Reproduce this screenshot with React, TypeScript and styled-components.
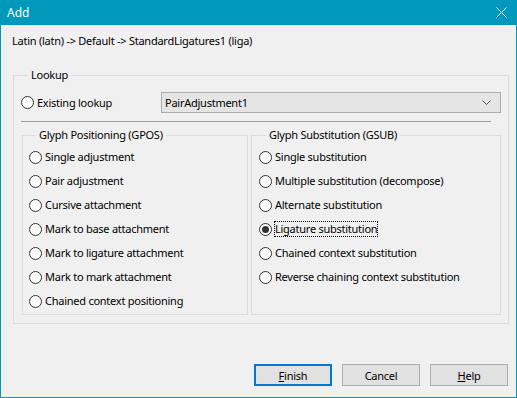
import React from "react";
import styled, { createGlobalStyle } from "styled-components";

const Global = createGlobalStyle`
  html, body { margin: 0; padding: 0; background: #f0f0f0; }
  body { font-family: "Noto Sans", "DejaVu Sans", sans-serif; font-size: 11px; letter-spacing: -0.25px; color: #000; }
  * { box-sizing: border-box; }
`;

const Window = styled.div`
  width: 517px;
  height: 398px;
  border: 1px solid #0099bc;
  border-top: none;
  background: #f0f0f0;
  display: flex;
  flex-direction: column;
`;

const TitleBar = styled.div`
  height: 25px;
  flex: none;
  background: #0099bc;
  color: #fff;
  display: flex;
  align-items: center;
  justify-content: space-between;
  padding: 0 10px 0 7px;
  font-size: 12px;
  letter-spacing: 0;
  margin: 0 -1px;
`;

const Body = styled.div`
  flex: 1;
  display: flex;
  flex-direction: column;
  padding: 0 7px 11px 12px;
`;

const PathLine = styled.div`
  height: 16px;
  line-height: 16px;
  margin-top: 8px;
  margin-left: -1px;
`;

const Group = styled.fieldset<{ $pad: string }>`
  margin: 0;
  border: 1px solid #dcdcdc;
  padding: ${(p) => p.$pad};
  min-width: 0;
`;

const Legend = styled.legend`
  padding: 0 3px;
  margin-left: 7px;
  line-height: 14px;
  height: 14px;
`;

const LookupGroup = styled(Group)`
  margin-top: 19px;
  height: 256px;
`;

const LookupRow = styled.div`
  display: flex;
  align-items: center;
  height: 21px;
  margin-top: 10px;
`;

const RadioLabel = styled.label<{ $w?: number }>`
  display: flex;
  align-items: center;
  gap: 3px;
  height: 24px;
  width: ${(p) => (p.$w ? `${p.$w}px` : "auto")};
  flex: none;
  white-space: nowrap;
`;

const Circle = styled.span<{ $on?: boolean }>`
  width: 13px;
  height: 13px;
  border-radius: 50%;
  border: 1px solid #333;
  background: #fff;
  display: flex;
  align-items: center;
  justify-content: center;
  flex: none;
  &::after {
    content: "";
    width: 7px;
    height: 7px;
    border-radius: 50%;
    background: ${(p) => (p.$on ? "#333" : "transparent")};
  }
`;

const Focus = styled.span<{ $focus?: boolean }>`
  outline: ${(p) => (p.$focus ? "1px dotted #000" : "none")};
  line-height: 14px;
`;

const Select = styled.div`
  flex: 1;
  height: 21px;
  background: #e5e5e5;
  border: 1px solid #adadad;
  display: flex;
  align-items: center;
  justify-content: space-between;
  padding: 0 9px 0 3px;
`;

const Separator = styled.div`
  height: 1px;
  background: #a0a0a0;
  margin: 8px 10px 6px 0;
`;

const Columns = styled.div`
  display: flex;
  gap: 3px;
  margin-left: 1px;
`;

const SubGroup = styled(Group)`
  height: 187px;
`;

const Left = styled(SubGroup)`
  width: 226px;
`;

const Right = styled(SubGroup)`
  flex: 1;
`;

const List = styled.div`
  display: flex;
  flex-direction: column;
  margin-top: 3px;
`;

const ButtonRow = styled.div`
  margin-top: auto;
  display: flex;
  justify-content: flex-end;
  gap: 10px;
  padding-right: 1px;
`;

const Button = styled.button<{ $default?: boolean }>`
  width: 78px;
  height: 22px;
  font: inherit;
  letter-spacing: inherit;
  color: #000;
  background: #e1e1e1;
  border: ${(p) => (p.$default ? "2px solid #0078d7" : "1px solid #adadad")};
  padding: 0;
  u { text-decoration: underline; }
`;

function Radio({ label, on, focus, w }: { label: string; on?: boolean; focus?: boolean; w?: number }) {
  return (
    <RadioLabel $w={w}>
      <Circle $on={on} />
      <Focus $focus={focus}>{label}</Focus>
    </RadioLabel>
  );
}

const gpos = [
  "Single adjustment",
  "Pair adjustment",
  "Cursive attachment",
  "Mark to base attachment",
  "Mark to ligature attachment",
  "Mark to mark attachment",
  "Chained context positioning",
];

const gsub = [
  "Single substitution",
  "Multiple substitution (decompose)",
  "Alternate substitution",
  "Ligature substitution",
  "Chained context substitution",
  "Reverse chaining context substitution",
];

export default function App() {
  return (
    <>
      <Global />
      <Window>
        <TitleBar>
          <span>Add</span>
          <svg width="11" height="11" viewBox="0 0 11 11">
            <path d="M0.5 0.5 L10.5 10.5 M10.5 0.5 L0.5 10.5" stroke="#fff" strokeWidth="1" />
          </svg>
        </TitleBar>
        <Body>
          <PathLine>Latin (latn) -&gt; Default -&gt; StandardLigatures1 (liga)</PathLine>
          <LookupGroup $pad="0 7px 0 7px">
            <Legend>Lookup</Legend>
            <LookupRow>
              <Radio label="Existing lookup" w={140} />
              <Select>
                <span>PairAdjustment1</span>
                <svg width="9" height="5" viewBox="0 0 9 5">
                  <path d="M0.5 0.5 L4.5 4.5 L8.5 0.5" stroke="#555" strokeWidth="1" fill="none" />
                </svg>
              </Select>
            </LookupRow>
            <Separator />
            <Columns>
              <Left $pad="0 6px">
                <Legend>Glyph Positioning (GPOS)</Legend>
                <List>
                  {gpos.map((t) => (
                    <Radio key={t} label={t} />
                  ))}
                </List>
              </Left>
              <Right $pad="0 7px">
                <Legend>Glyph Substitution (GSUB)</Legend>
                <List>
                  {gsub.map((t) => (
                    <Radio key={t} label={t} on={t === "Ligature substitution"} focus={t === "Ligature substitution"} />
                  ))}
                </List>
              </Right>
            </Columns>
          </LookupGroup>
          <ButtonRow>
            <Button $default>
              <u>F</u>inish
            </Button>
            <Button>Cancel</Button>
            <Button>
              <u>H</u>elp
            </Button>
          </ButtonRow>
        </Body>
      </Window>
    </>
  );
}
